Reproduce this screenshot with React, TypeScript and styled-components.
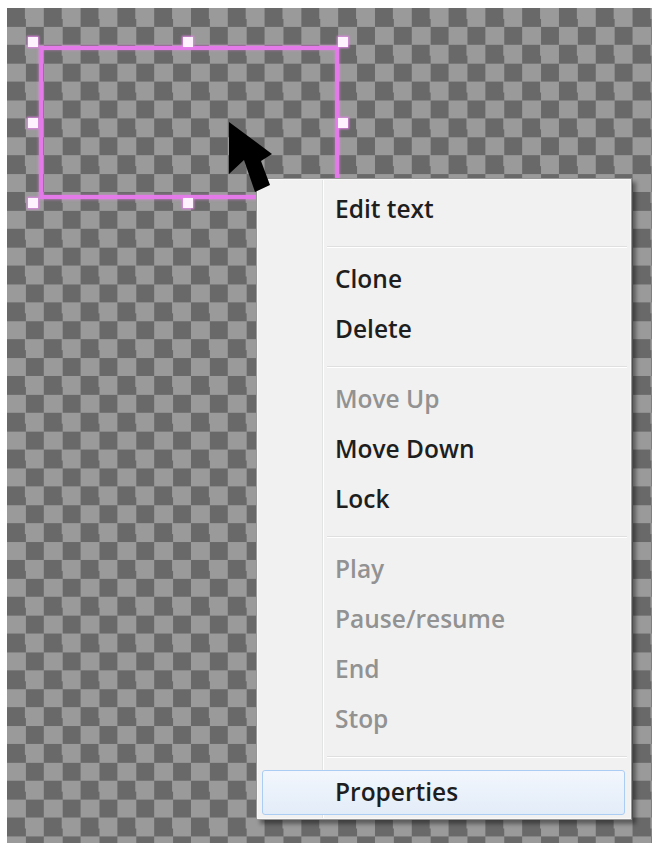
import * as React from 'react';
import styled, { createGlobalStyle } from 'styled-components';

const GlobalStyle = createGlobalStyle`
  html, body {
    margin: 0;
    padding: 0;
    background: #ffffff;
  }
  body {
    font-family: 'Open Sans', 'Noto Sans', sans-serif;
  }
`;

const Page = styled.div`
  box-sizing: border-box;
  width: 654px;
  height: 843px;
  padding: 8px 2px 0 7px;
  overflow: hidden;
`;

// transparent-stage checkerboard
const Canvas = styled.div`
  position: relative;
  width: 100%;
  height: 100%;
  background: repeating-conic-gradient(#9a9a9a 0 25%, #696969 0 50%) 0 0 / 36.8px 36.8px;
`;

const Selection = styled.div`
  position: absolute;
  left: 32px;
  top: 38px;
  width: 300px;
  height: 153px;
  box-sizing: border-box;
  border: 4px solid #e47ae9;
  box-shadow: 0 0 3px rgba(245, 140, 245, 0.8), inset 0 0 3px rgba(245, 140, 245, 0.6);
`;

const Handle = styled.div<{ $x: number; $y: number }>`
  position: absolute;
  left: ${p => p.$x - 5}px;
  top: ${p => p.$y - 5}px;
  width: 10px;
  height: 10px;
  background: #fdf2fd;
  box-shadow: 0 0 2px 1px #e486e8;
`;

const Menu = styled.ul`
  position: absolute;
  left: 249px;
  top: 170px;
  width: 376px;
  box-sizing: border-box;
  margin: 0;
  padding: 6px 0 4px;
  list-style: none;
  display: flex;
  flex-direction: column;
  border: 1px solid #979797;
  background: linear-gradient(
    to right,
    #f1f1f1 65px,
    #e2e3e3 65px 66px,
    #ffffff 66px 67px,
    #f1f1f1 67px
  );
  box-shadow: inset 0 0 0 1px #f9f9f9, 4px 4px 4px rgba(0, 0, 0, 0.4);
`;

const Item = styled.li<{ $disabled?: boolean; $active?: boolean }>`
  box-sizing: border-box;
  height: ${p => (p.$active ? 45 : 50)}px;
  margin: ${p => (p.$active ? '5px 6px 0 5px' : '0')};
  display: flex;
  align-items: center;
  padding-left: ${p => (p.$active ? 72 : 78)}px;
  padding-bottom: 3px;
  font-size: 24.5px;
  font-weight: 600;
  color: ${p => (p.$disabled ? '#929292' : '#1e1e1e')};
  border-radius: 3px;
  border: ${p => (p.$active ? '1px solid #abcdf4' : 'none')};
  background: ${p =>
    p.$active ? 'linear-gradient(to bottom, #f3f7fd, #e2ecf8)' : 'transparent'};
`;

const Separator = styled.li`
  height: 20px;
  margin: 0 4px 0 70px;
  display: flex;
  flex-direction: column;
  padding-top: 11px;
  box-sizing: border-box;

  &::before {
    content: '';
    height: 1px;
    background: #dfdfdf;
  }
  &::after {
    content: '';
    height: 1px;
    background: #ffffff;
  }
`;

const Cursor = styled.svg`
  position: absolute;
  left: 218px;
  top: 110px;
  width: 52px;
  height: 78px;
`;

type Entry = { label: string; disabled?: boolean; active?: boolean } | 'sep';

const entries: Entry[] = [
  { label: 'Edit text' },
  'sep',
  { label: 'Clone' },
  { label: 'Delete' },
  'sep',
  { label: 'Move Up', disabled: true },
  { label: 'Move Down' },
  { label: 'Lock' },
  'sep',
  { label: 'Play', disabled: true },
  { label: 'Pause/resume', disabled: true },
  { label: 'End', disabled: true },
  { label: 'Stop', disabled: true },
  'sep',
  { label: 'Properties', active: true },
];

const handles = [
  [26, 34], [181, 34], [336, 34],
  [26, 115], [336, 115],
  [26, 195], [181, 195], [336, 195],
];

export default function App() {
  return (
    <>
      <GlobalStyle />
      <Page>
        <Canvas>
          <Selection />
          {handles.map(([x, y]) => (
            <Handle key={`${x}-${y}`} $x={x} $y={y} />
          ))}
          <Menu>
            {entries.map((e, i) =>
              e === 'sep' ? (
                <Separator key={i} />
              ) : (
                <Item key={i} $disabled={e.disabled} $active={e.active}>
                  {e.label}
                </Item>
              )
            )}
          </Menu>
          <Cursor viewBox="0 0 52 78">
            <polygon
              points="4,4 4,56 19,42 30,74 45,67 36,43 47,36"
              fill="#000"
            />
          </Cursor>
        </Canvas>
      </Page>
    </>
  );
}
